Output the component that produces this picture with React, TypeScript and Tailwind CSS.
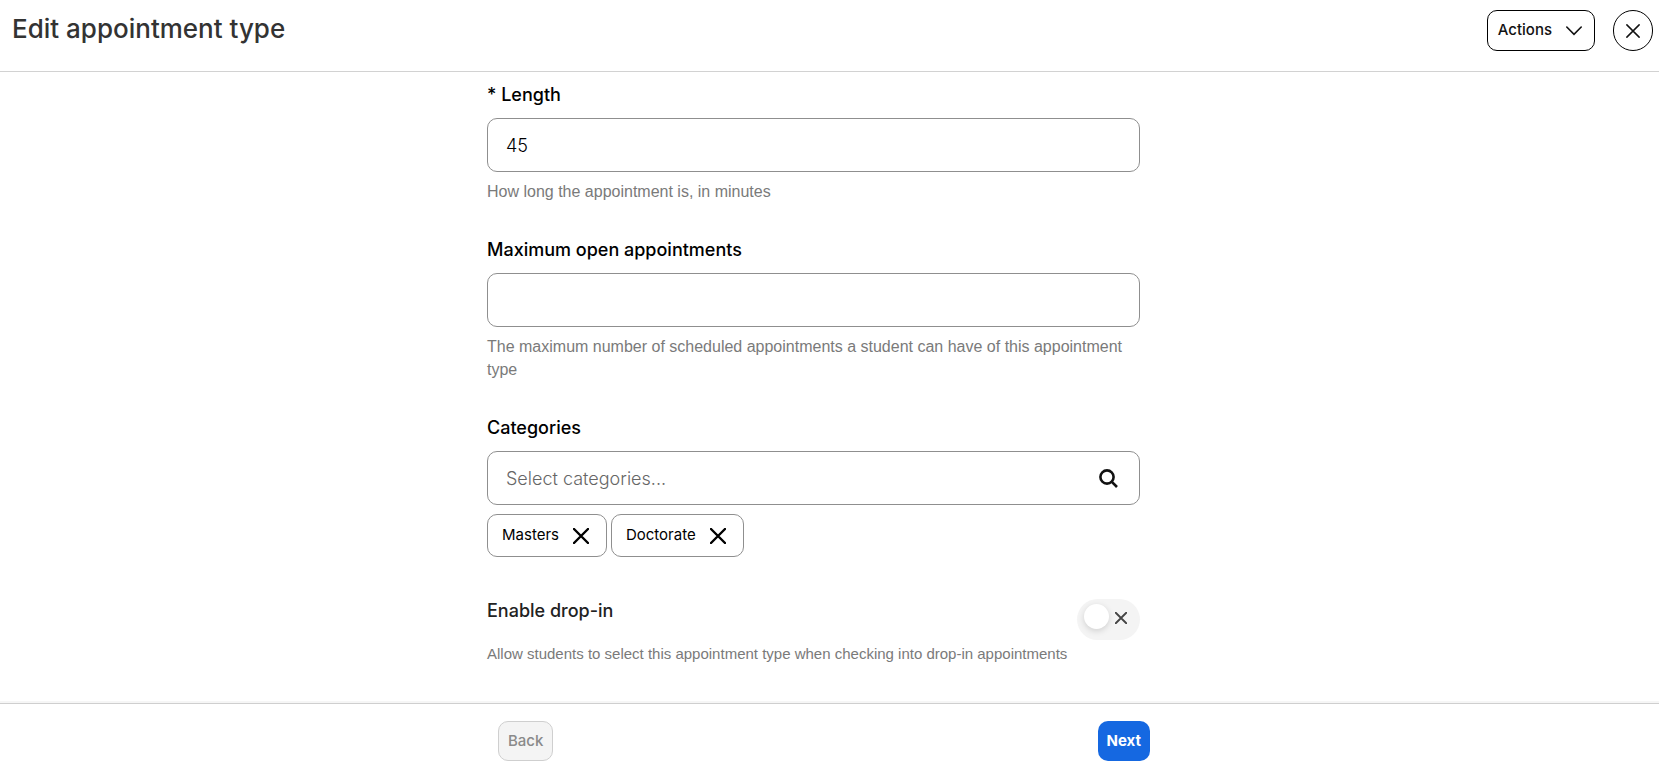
import { useState } from 'react';
import type { ReactNode } from 'react';

interface FieldProps {
  id: string;
  label: string;
  required?: boolean;
  hint?: string;
  children: ReactNode;
}

const inputClass =
  'block h-[54px] w-full rounded-[10px] border border-[#8f8f8f] bg-white px-[18px] text-lg font-light text-black placeholder:text-[#666] outline-none focus:border-[#1568e1]';

function CrossIcon({ className, strokeWidth }: { className: string; strokeWidth: number }) {
  return (
    <svg className={className} viewBox="0 0 16 16" fill="none" stroke="currentColor" strokeWidth={strokeWidth} aria-hidden="true">
      <path strokeLinecap="round" d="M1 1l14 14M15 1L1 15" />
    </svg>
  );
}

function Field({ id, label, required, hint, children }: FieldProps) {
  return (
    <div>
      <label htmlFor={id} className="mb-[10px] block text-lg/[26px] font-medium text-black">
        {required && '* '}
        {label}
      </label>
      {children}
      {hint && <p className="mt-2 font-['Liberation_Sans',sans-serif] text-base/[23px] text-[#7a7a7a]">{hint}</p>}
    </div>
  );
}

export default function App() {
  const [length, setLength] = useState('45');
  const [maxOpen, setMaxOpen] = useState('');
  const [search, setSearch] = useState('');
  const [categories, setCategories] = useState(['Masters', 'Doctorate']);
  const [dropIn, setDropIn] = useState(false);

  return (
    <div className="flex h-screen flex-col bg-white font-[Inter,'Liberation_Sans',sans-serif] text-[#121212]">
      {/* Header */}
      <header className="flex h-[72px] shrink-0 items-start justify-between border-b border-[#d2d2d2] pr-[6px] pl-3">
        <h1 className="pt-[11px] text-[26px]/[36px] font-medium text-[#333]">Edit appointment type</h1>
        <div className="flex gap-[18px] pt-[10px]">
          <button type="button" className="flex h-[41px] items-center gap-[14px] rounded-[10px] border border-black pr-3 pl-[10px] text-[15px] font-medium">
            Actions
            <svg className="h-[10px] w-4" viewBox="0 0 16 10" fill="none" stroke="currentColor" strokeWidth="1.6" aria-hidden="true">
              <path strokeLinecap="round" d="M0.8 1L8 8.4L15.2 1" />
            </svg>
          </button>
          <button type="button" aria-label="Close" className="flex h-[41px] w-10 items-center justify-center rounded-full border border-black">
            <CrossIcon className="size-[14px]" strokeWidth={1.7} />
          </button>
        </div>
      </header>

      {/* Form */}
      <main className="min-h-0 flex-1 overflow-y-auto pt-[10px] pr-8">
        <form className="mx-auto flex max-w-[653px] flex-col gap-[34px]">
          <Field id="length" label="Length" required hint="How long the appointment is, in minutes">
            <input id="length" className={inputClass} value={length} onChange={(e) => setLength(e.target.value)} />
          </Field>

          <Field
            id="max-open"
            label="Maximum open appointments"
            hint="The maximum number of scheduled appointments a student can have of this appointment type"
          >
            <input id="max-open" className={inputClass} value={maxOpen} onChange={(e) => setMaxOpen(e.target.value)} />
          </Field>

          <Field id="categories" label="Categories">
            <div className="relative">
              <input
                id="categories"
                className={inputClass}
                placeholder="Select categories..."
                value={search}
                onChange={(e) => setSearch(e.target.value)}
              />
              <svg className="absolute top-[18px] right-[22px] size-[19px]" viewBox="0 0 19 19" fill="none" stroke="currentColor" strokeWidth="2.6" aria-hidden="true">
                <circle cx="8" cy="8" r="6.6" />
                <path d="M12.6 12.6L18 18" />
              </svg>
            </div>
            <div className="mt-[9px] flex gap-1">
              {categories.map((name) => (
                <button
                  key={name}
                  type="button"
                  aria-label={`Remove ${name}`}
                  onClick={() => setCategories(categories.filter((c) => c !== name))}
                  className="flex h-[43px] items-center gap-[14px] rounded-[10px] border border-[#8f8f8f] pr-[17px] pl-[14px] text-[15px] text-black"
                >
                  {name}
                  <CrossIcon className="size-4" strokeWidth={2.4} />
                </button>
              ))}
            </div>
          </Field>

          <div className="pt-[7px] pb-8">
            <div className="flex items-start justify-between">
              <label htmlFor="drop-in" className="text-lg/[26px] font-medium text-[#222]">
                Enable drop-in
              </label>
              <span className="relative mt-px flex h-[41px] w-[63px] rounded-full bg-[#f4f4f4]">
                <input
                  id="drop-in"
                  type="checkbox"
                  role="switch"
                  checked={dropIn}
                  onChange={(e) => setDropIn(e.target.checked)}
                  className="peer absolute inset-0 z-10 size-full cursor-pointer opacity-0"
                />
                <span className="mt-[5px] ml-[7px] size-[25px] rounded-full bg-white shadow-[0_2px_6px_rgba(0,0,0,0.15)] peer-checked:translate-x-6" />
                <CrossIcon className="mt-[13px] ml-[6px] size-3 text-[#444] peer-checked:hidden" strokeWidth={2.4} />
              </span>
            </div>
            <p className="mt-[2px] font-['Liberation_Sans',sans-serif] text-[15px]/[23px] text-[#7a7a7a]">
              Allow students to select this appointment type when checking into drop-in appointments
            </p>
          </div>
        </form>
      </main>

      {/* Footer */}
      <footer className="h-[66px] shrink-0 border-t border-[#cfcfcf] pt-[17px] pr-[11px] shadow-[0_-2px_0_#f6f6f6]">
        <div className="mx-auto flex max-w-[652px] justify-between">
          <button type="button" disabled className="h-10 rounded-[10px] border border-[#cfcfcf] bg-[#f4f4f4] px-[9px] text-[15px] font-medium text-[#8a8a8a]">
            Back
          </button>
          <button type="button" className="h-10 rounded-[10px] bg-[#1568e1] px-[9px] text-[15px] font-bold text-white">
            Next
          </button>
        </div>
      </footer>
    </div>
  );
}
